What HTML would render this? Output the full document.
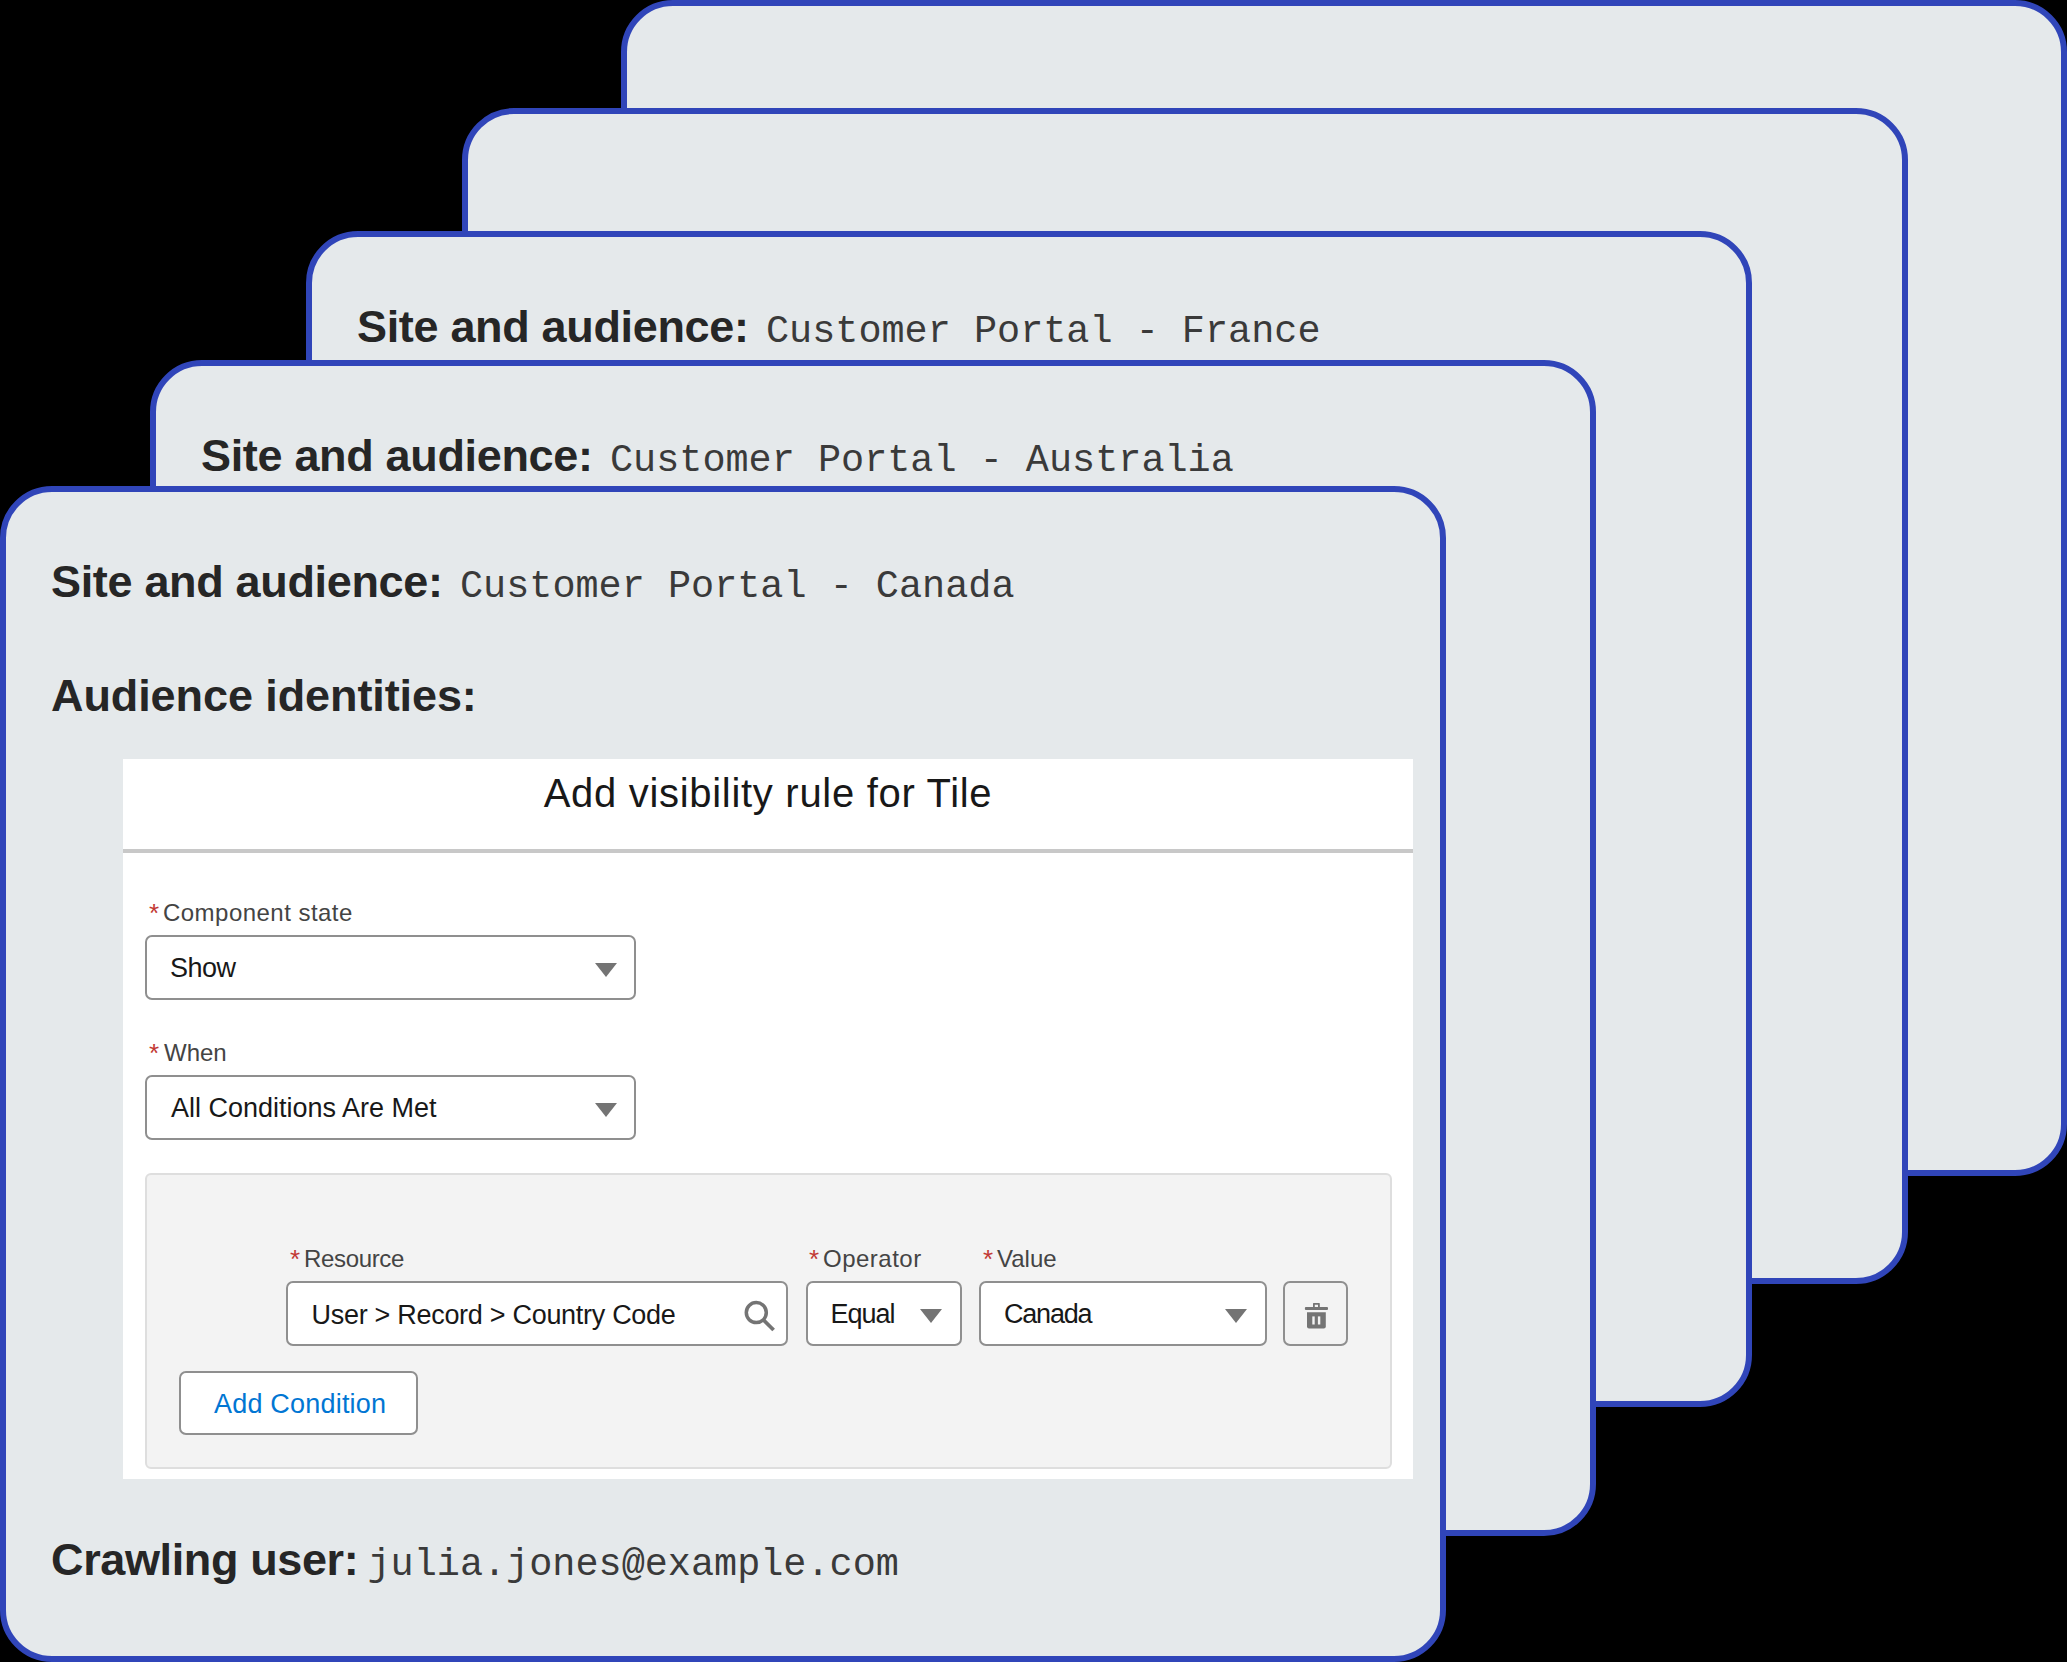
<!DOCTYPE html>
<html>
<head>
<meta charset="utf-8">
<style>
html,body{margin:0;padding:0;background:#000;}
body{width:2067px;height:1662px;overflow:hidden;position:relative;font-family:"Liberation Sans",sans-serif;}
.card{position:absolute;width:1434px;height:1164px;border:6px solid #3045B9;border-radius:52px;background:#E5E9EB;box-sizing:content-box;}
.t{position:absolute;white-space:nowrap;line-height:1;}
.h{font-weight:bold;font-size:45px;letter-spacing:-0.33px;color:#262626;}
.m{font-family:"Liberation Mono",monospace;font-size:38.5px;color:#3a3a3a;}
.p{position:absolute;}
.ui{color:#181818;font-size:27px;}
.lbl{color:#444444;font-size:24px;}
.req{color:#c23934;font-size:26px;}
.box{position:absolute;box-sizing:border-box;border:2px solid #8f8f8f;border-radius:7px;background:#fff;}
.arrow{position:absolute;width:0;height:0;border-left:11px solid transparent;border-right:11px solid transparent;border-top:14px solid #747474;}
</style>
</head>
<body>
<div class="card" style="left:621px;top:0px;"></div>
<div class="card" style="left:462px;top:108px;"></div>
<div class="card" style="left:306px;top:231px;">
  <div class="t h" style="left:45px;top:67px;">Site and audience:</div>
  <div class="t m" style="left:454px;top:75.5px;">Customer Portal - France</div>
</div>
<div class="card" style="left:150px;top:360px;">
  <div class="t h" style="left:45px;top:67px;">Site and audience:</div>
  <div class="t m" style="left:454px;top:75.5px;">Customer Portal - Australia</div>
</div>
<div class="card" style="left:0px;top:486px;">
  <div class="t h" style="left:45px;top:67px;">Site and audience:</div>
  <div class="t m" style="left:454px;top:75.5px;">Customer Portal - Canada</div>
  <div class="t h" style="left:45px;top:181px;letter-spacing:-0.09px;">Audience identities:</div>
  <div class="t h" style="left:45px;top:1045px;letter-spacing:-0.37px;">Crawling user:</div>
  <div class="t m" style="left:361.5px;top:1053.5px;">julia.jones@example.com</div>
</div>

<!-- panel -->
<div class="p" style="left:123px;top:759px;width:1290px;height:720px;background:#fff;"></div>
<div class="p" style="left:123px;top:849px;width:1290px;height:4px;background:#c8c8c8;"></div>
<div class="t ui" style="left:123px;width:1290px;text-align:center;top:773px;font-size:40px;letter-spacing:0.7px;">Add visibility rule for Tile</div>

<div class="t req" style="left:149px;top:900px;">*</div>
<div class="t lbl" style="left:163px;top:901.4px;letter-spacing:0.47px;">Component state</div>
<div class="box" style="left:145px;top:935px;width:491px;height:65px;"></div>
<div class="t ui" style="left:170px;top:955px;letter-spacing:-0.5px;">Show</div>
<div class="arrow" style="left:595px;top:963px;"></div>

<div class="t req" style="left:149px;top:1040px;">*</div>
<div class="t lbl" style="left:164px;top:1040.7px;">When</div>
<div class="box" style="left:145px;top:1074.5px;width:491px;height:65px;"></div>
<div class="t ui" style="left:171px;top:1094.5px;">All Conditions Are Met</div>
<div class="arrow" style="left:595px;top:1102.5px;"></div>

<div class="p" style="box-sizing:border-box;left:144.5px;top:1173px;width:1247px;height:296px;background:#f3f3f3;border:2px solid #dedede;border-radius:6px;"></div>

<div class="t req" style="left:290px;top:1246px;">*</div>
<div class="t lbl" style="left:304px;top:1247px;letter-spacing:-0.35px;">Resource</div>
<div class="box" style="left:286px;top:1281px;width:502px;height:65px;"></div>
<div class="t ui" style="left:311.5px;top:1302px;letter-spacing:-0.29px;">User &gt; Record &gt; Country Code</div>
<svg class="p" style="left:740px;top:1296px;" width="40" height="40" viewBox="0 0 40 40">
  <circle cx="16.3" cy="16.6" r="10" fill="none" stroke="#747474" stroke-width="3.5"/>
  <line x1="23.5" y1="24" x2="33.6" y2="34" stroke="#747474" stroke-width="3.8"/>
</svg>

<div class="t req" style="left:809px;top:1246px;">*</div>
<div class="t lbl" style="left:823px;top:1247px;letter-spacing:0.5px;">Operator</div>
<div class="box" style="left:805.5px;top:1281px;width:156px;height:65px;"></div>
<div class="t ui" style="left:830.5px;top:1300.6px;letter-spacing:-1px;">Equal</div>
<div class="arrow" style="left:920px;top:1309px;"></div>

<div class="t req" style="left:983px;top:1246px;">*</div>
<div class="t lbl" style="left:997px;top:1247px;">Value</div>
<div class="box" style="left:978.5px;top:1281px;width:288px;height:65px;"></div>
<div class="t ui" style="left:1004px;top:1300.6px;letter-spacing:-1.2px;">Canada</div>
<div class="arrow" style="left:1224.5px;top:1309px;"></div>

<div class="box" style="left:1283px;top:1281px;width:65px;height:65px;background:#f3f3f3;"></div>
<svg class="p" style="left:1300px;top:1298px;" width="34" height="34" viewBox="0 0 34 34">
  <rect x="4.9" y="9" width="23.1" height="3.1" rx="1" fill="#747474"/>
  <path d="M13 9.5 V5.5 Q13 4.9 13.6 4.9 H19.2 Q19.8 4.9 19.8 5.5 V9.5 H18 V6.7 H14.8 V9.5 Z" fill="#747474"/>
  <path d="M7 14.3 H25.8 V28.6 Q25.8 30.6 23.8 30.6 H9 Q7 30.6 7 28.6 Z" fill="#747474"/>
  <rect x="12.3" y="18.4" width="2.4" height="8.1" fill="#f3f3f3"/>
  <rect x="17.9" y="18.4" width="2.4" height="8.1" fill="#f3f3f3"/>
</svg>

<div class="box" style="left:179px;top:1371px;width:239px;height:64px;"></div>
<div class="t ui" style="left:214px;top:1390.6px;color:#0176d3;letter-spacing:0.2px;">Add Condition</div>
</body>
</html>
